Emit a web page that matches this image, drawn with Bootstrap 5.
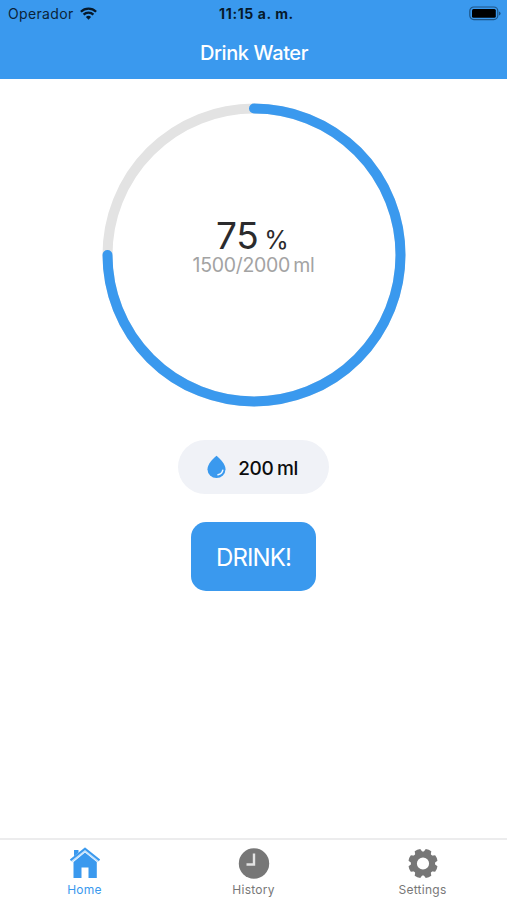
<!DOCTYPE html>
<html lang="es">
<head>
<meta charset="utf-8">
<meta name="viewport" content="width=device-width, initial-scale=1">
<title>Drink Water</title>
<link href="https://cdn.jsdelivr.net/npm/bootstrap@5.3.0/dist/css/bootstrap.min.css" rel="stylesheet">
<style>
  :root { --water: #3a99ee; }
  body { font-family: Inter, "Liberation Sans", sans-serif; color: #2b2b2d; line-height: 1; }
  svg { display: block; flex: none; }
  .app-header { background: var(--water); height: 79px; }
  .status-bar { height: 27px; padding: 0 6px 0 8px; font-size: 14px; color: #0b2338; }
  .status-time { font-weight: 700; color: #06192b; letter-spacing: .6px; padding-left: 4px; }
  .carrier-group { gap: 6px; }
  .carrier { letter-spacing: .35px; }
  .app-title { font-size: 20px; font-weight: 500; letter-spacing: -.4px; height: 51px; padding-left: 1px; }
  .ring-box { width: 304px; height: 304px; margin: 24px auto 0; padding-left: .5px; }
  .ring-label { z-index: 1; padding-bottom: 16px; }
  .percent { font-size: 37px; letter-spacing: -.4px; line-height: 34px; }
  .percent-sign { font-size: 25px; margin-left: 6px; line-height: 26px; letter-spacing: -1px; }
  .percent-row { padding-right: 3px; }
  .progress-detail { font-size: 19.5px; line-height: 20px; letter-spacing: -.3px; word-spacing: -2px; color: #a3a3a3; margin-top: 2px; }
  .amount { width: 151px; height: 54px; margin-top: 33px; background: #f0f2f7; color: #0c0c0d; font-size: 19px; font-weight: 500; letter-spacing: -.4px; word-spacing: -1px; gap: 12px; padding: 2px 2px 0 0; }
  .amount svg { margin-top: -2px; }
  .btn-drink { width: 125px; height: 69px; margin-top: 28px; border-radius: 15px; font-size: 24px; letter-spacing: -.9px; color: #fff; background: var(--water); padding: 2px 0 0; border: 0; }
  .btn-drink:hover { background: #2e8de2; color: #fff; }
  .tab-bar { height: 62px; border-top: 2px solid #ececed; }
  .tab-bar .nav-link { color: #777; font-size: 12px; padding: 7px 0 0; letter-spacing: .25px; gap: 5px; }
  .tab-bar .nav-link.active { color: var(--water); }
</style>
</head>
<body class="vh-100 d-flex flex-column bg-white overflow-hidden">
  <header class="app-header">
    <div class="status-bar row g-0 align-items-center">
      <div class="carrier-group col d-flex align-items-center">
        <span class="carrier">Operador</span>
        <svg width="17" height="13" viewBox="0 0 17 13" fill="none" stroke="#06192b" stroke-width="2.3"><path d="M.9 4.7a10.8 10.8 0 0 1 15.2 0M3.6 7.6a7 7 0 0 1 9.8 0"/><path d="M8.5 12.7 5.9 10a3.7 3.7 0 0 1 5.2 0z" fill="#06192b" stroke="none"/></svg>
      </div>
      <div class="col-auto status-time">11:15 a. m.</div>
      <div class="col d-flex justify-content-end">
        <svg width="33" height="15" viewBox="0 0 33 15"><rect x="1.8" y="1" width="28" height="12.600" rx="4" fill="none" stroke="#1f5585" stroke-width="1.2"/><rect x="4" y="3" width="23.800" height="8.800" rx="1.500" fill="#000"/><path d="M31 5.400q1.600.4 1.600 2t-1.600 2z" fill="#1f5585"/></svg>
      </div>
    </div>
    <h1 class="app-title text-white m-0 d-flex align-items-center justify-content-center">Drink Water</h1>
  </header>

  <main class="flex-grow-1 d-flex flex-column align-items-center">
    <div class="ring-box position-relative">
      <svg width="304" height="304" viewBox="0 0 304 304" fill="none" stroke-width="10">
        <circle cx="152" cy="152" r="146.5" stroke="#e3e3e3"/>
        <path d="M152 5.5A146.5 146.5 0 1 1 5.5 152" stroke="#3a99ee" stroke-linecap="round"/>
      </svg>
      <div class="ring-label position-absolute top-0 start-0 w-100 h-100 d-flex flex-column align-items-center justify-content-center">
        <div class="percent-row d-flex align-items-baseline"><span class="percent">75</span><span class="percent-sign">%</span></div>
        <div class="progress-detail">1500/2000 ml</div>
      </div>
    </div>

    <div class="amount rounded-pill d-flex align-items-center justify-content-center">
      <svg width="19" height="24" viewBox="0 0 19 24"><path d="M9.5.8C5.800 3.900.5 9.300.5 14.200a9 8.900 0 0 0 18 0C18.500 9.300 13.200 3.900 9.500.8z" fill="#3a99ee"/><path d="M11 19.800q4-.8 4.800-4.600" fill="none" stroke="#eaf5ff" stroke-width="1.500" stroke-linecap="round"/></svg>
      <span>200 ml</span>
    </div>
    <button type="button" class="btn btn-drink">DRINK!</button>
  </main>

  <nav class="tab-bar nav nav-justified flex-nowrap">
    <a class="nav-link active d-flex flex-column align-items-center" href="#">
      <svg width="32" height="32" viewBox="0 0 32 32" fill="#3a99ee"><path d="M5 3h4.500v6L5 13z"/><path d="M16 5.500 4.500 15v16H12.500V20.500h7V31h8.300V15z"/><path d="M2 13.800 16 2.500 30 13.800" fill="none" stroke="#c4e1fb" stroke-width="3.600"/><path d="M1.500 13.200 16 1.700l14.500 11.500" fill="none" stroke="#3a99ee" stroke-width="2"/></svg>
      <span>Home</span>
    </a>
    <a class="nav-link d-flex flex-column align-items-center" href="#">
      <svg width="32" height="32" viewBox="0 0 32 32"><circle cx="16" cy="16.500" r="15.200" fill="#777"/><path d="M16 6.500V17.500H8.500" fill="none" stroke="#e4e4e4" stroke-width="2.400"/></svg>
      <span>History</span>
    </a>
    <a class="nav-link d-flex flex-column align-items-center" href="#">
      <svg width="32" height="32" viewBox="0 0 32 32" fill="none"><circle cx="16" cy="16.500" r="9.100" stroke="#777" stroke-width="6"/><g fill="#777" transform="translate(16 16.500) rotate(22.500)"><path id="tooth" d="M-4-10.500-3-14.400Q0-15.300 3-14.400L4-10.500z"/><use href="#tooth" transform="rotate(45)"/><use href="#tooth" transform="rotate(90)"/><use href="#tooth" transform="rotate(135)"/><use href="#tooth" transform="rotate(180)"/><use href="#tooth" transform="rotate(225)"/><use href="#tooth" transform="rotate(270)"/><use href="#tooth" transform="rotate(315)"/></g></svg>
      <span>Settings</span>
    </a>
  </nav>
<script src="https://cdn.jsdelivr.net/npm/bootstrap@5.3.0/dist/js/bootstrap.bundle.min.js"></script>
</body>
</html>
